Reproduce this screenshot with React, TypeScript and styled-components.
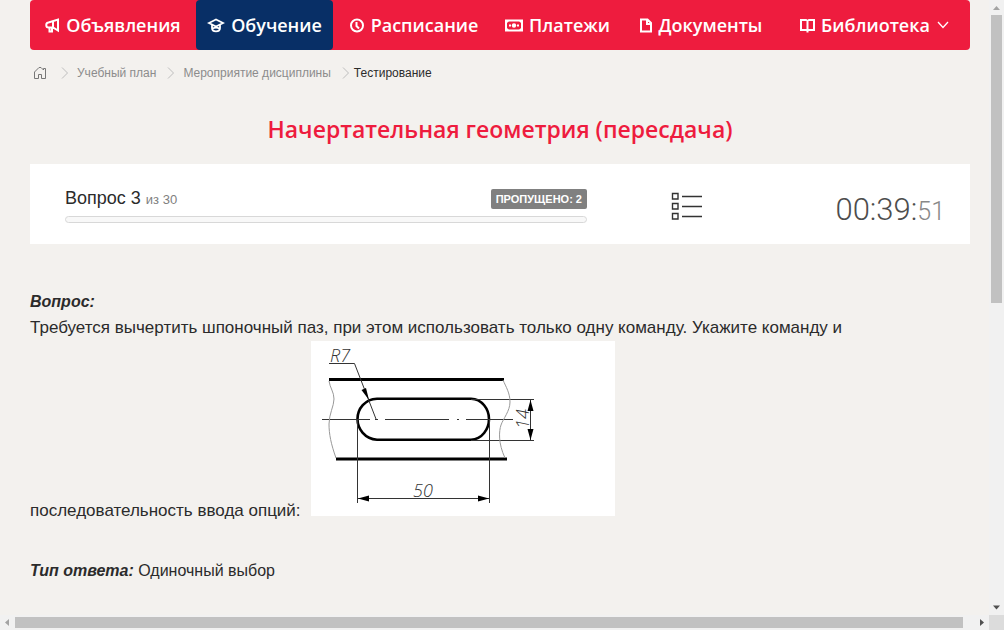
import React from "react";
import styled, { createGlobalStyle } from "styled-components";

const GlobalStyle = createGlobalStyle`
  *, *::before, *::after { box-sizing: border-box; }
  body {
    margin: 0;
    background: #f3f1ee;
    color: #2b2b2b;
    font-family: "Liberation Sans", Arial, sans-serif;
    font-size: 16px;
  }
`;

const Shell = styled.div`
  display: grid;
  grid-template-columns: minmax(0, 1fr) 15px;
  grid-template-rows: minmax(0, 1fr) 15px;
  height: 100vh;
`;

const Page = styled.div`
  overflow: hidden;
  padding: 0 19px 0 30px;
`;

const Nav = styled.nav`
  display: grid;
  grid-template-columns: 166fr 137fr 161fr 127fr 159fr 190fr;
  height: 50px;
  border-radius: 4px;
  background: #ee1c3e;
`;

const NavLink = styled.a<{ $active?: boolean }>`
  display: flex;
  align-items: center;
  justify-content: center;
  gap: 6px;
  border-radius: 4px;
  background: ${(p) => (p.$active ? "#082f66" : "transparent")};
  color: #fff;
  font: 600 18px/24px "Open Sans", sans-serif;
  text-decoration: none;
  white-space: nowrap;
`;

const NavIcon = styled.svg`
  flex: none;
  fill: none;
  stroke: #fff;
  stroke-width: 2;
`;

const Crumbs = styled.nav`
  display: flex;
  align-items: center;
  height: 46px;
  padding-left: 3px;
  font-size: 12px;
  line-height: 16px;
`;

const Crumb = styled.a`
  display: flex;
  color: #8c8c8c;
  text-decoration: none;
`;

const CrumbCurrent = styled.span`
  color: #2b2b2b;
`;

const CrumbArrow = styled.svg<{ $tight?: boolean }>`
  flex: none;
  margin: 0 ${(p) => (p.$tight ? "3px" : "7px")} 0 10px;
  fill: none;
  stroke: #bdbdbd;
`;

const Title = styled.h1`
  margin: 17px 0 18px;
  color: #ee1c3e;
  font: 600 23px/33px "Open Sans", sans-serif;
  text-align: center;
`;

const StatusCard = styled.section`
  display: grid;
  grid-template-columns: 592fr 130fr 218fr;
  align-items: center;
  height: 80px;
  background: #fff;
`;

const Progress = styled.div`
  padding: 2px 35px 0;
`;

const ProgressHead = styled.div`
  display: flex;
  align-items: center;
  justify-content: space-between;
  height: 22px;
  margin-bottom: 6px;
  font-size: 18px;
`;

const Total = styled.small`
  color: #808080;
  font-size: 13px;
`;

const SkippedBadge = styled.span`
  padding: 0 5px;
  border-radius: 2px;
  background: #808080;
  color: #fff;
  font-size: 11px;
  font-weight: bold;
  line-height: 20px;
`;

const ProgressTrack = styled.div`
  height: 7px;
  border: 1px solid #d8d8d8;
  border-radius: 4px;
  background: #f8f8f8;
`;

const ListButton = styled.button`
  display: flex;
  justify-self: center;
  padding: 4px 0 0;
  border: 0;
  background: none;
  cursor: pointer;
`;

const Timer = styled.div`
  padding: 14px 25px 0 0;
  color: #4d4d4d;
  font: 300 31px/40px Roboto, sans-serif;
  text-align: right;
`;

const Seconds = styled.span`
  color: #888;
  font-size: 25px;
`;

const Question = styled.section`
  padding-top: 45px;
  line-height: 26px;
`;

const Label = styled.strong`
  font-style: italic;
`;

const QuestionText = styled.p`
  margin: 0;
  font-size: 17px;
`;

const Drawing = styled.svg`
  margin: 0 6px;
  background: #fff;
  vertical-align: baseline;
`;

const DrawingText = styled.text`
  fill: #333;
  stroke: none;
  font: italic 300 18px "Open Sans", sans-serif;
`;

const AnswerType = styled.p`
  margin: 0;
  padding-top: 34px;
`;

const ScrollTrack = styled.div<{ $vertical?: boolean }>`
  display: flex;
  flex-direction: ${(p) => (p.$vertical ? "column" : "row")};
  align-items: center;
  background: #f1f1f1;
`;

const ScrollArrow = styled.svg`
  flex: none;
  width: 15px;
  height: 15px;
`;

const ScrollThumb = styled.div<{ $vertical?: boolean; $share: string }>`
  flex: 0 0 calc((100% - 30px) * ${(p) => p.$share});
  ${(p) => (p.$vertical ? "width: 11px;" : "height: 11px;")}
  background: #c1c1c1;
`;

const ScrollRest = styled.div`
  flex: 1;
`;

const ScrollCorner = styled.div`
  background: #dcdcdc;
`;

function Arrow({ tight }: { tight?: boolean }) {
  return (
    <CrumbArrow $tight={tight} width="10" height="12" viewBox="0 0 10 12" aria-hidden="true">
      <path d="M2 .5 7.5 6 2 11.5" />
    </CrumbArrow>
  );
}

function KeywayDrawing() {
  return (
    <Drawing width="304" height="175" viewBox="0 0 304 175" role="img" aria-label="Шпоночный паз">
      <g fill="none" stroke="#000" strokeWidth="3">
        <path d="M18 38.5H193M25 118H196" />
        <path d="M66 57.7H160C171 58 178 68 178 78S171 98.5 160 98.7H66C54 98 46.5 88 46.5 78S54 58 66 57.7Z" strokeWidth="2.6" />
      </g>
      <g fill="none" stroke="#333" strokeWidth="1">
        <path d="M18 22.5H43.5L65 78" />
        <path d="M11 78.5H59M64 78.5H67M74 78.5H138M146 78.5H148M155 78.5H202" />
        <path d="M46.5 78V162M178.5 78V162M47 157.5H178" />
        <path d="M160 58.5H223M160 99.5H223M219.5 59V99" />
      </g>
      <g fill="none" stroke="#999" strokeWidth="1">
        <path d="M18 40C19 47 23 51 23 58S18 73 18 83S20 103 25 117" />
        <path d="M192 39C195 46 199 52 199 61S192 78 190 84S187 102 194 117" />
      </g>
      <g fill="#000">
        <path d="M58 59 50.5 49 55 47Z" />
        <path d="M47 157.5 58 154.5V160.5ZM178 157.5 167 154.5V160.5Z" />
        <path d="M219.5 59 216.5 70H222.5ZM219.5 99 216.5 88H222.5Z" />
      </g>
      <DrawingText x="19" y="21">R7</DrawingText>
      <DrawingText x="102" y="156">50</DrawingText>
      <DrawingText transform="translate(218 88) rotate(-90)">14</DrawingText>
    </Drawing>
  );
}

export default function App() {
  return (
    <>
      <GlobalStyle />
      <Shell>
        <Page>
          <Nav>
            <NavLink href="#news">
              <NavIcon width="15" height="15" viewBox="0 0 15 15" aria-hidden="true">
                <path d="M13 1.5V12.500L8 9.5H3.500C.5 9.500 .5 4.500 3.500 4.500L13 1.500ZM4.500 9.500V13.500H7V9.500M8 4V9" />
              </NavIcon>
              Объявления
            </NavLink>
            <NavLink href="#study" $active>
              <NavIcon width="18" height="15" viewBox="0 0 18 15" aria-hidden="true">
                <path d="M2 5 9 1.500 16 5 9 8.500ZM5 7V10C5 14.500 13 14.500 13 10V7M5.500 10.500C7.500 9.500 10.500 9.500 12.500 10.500" strokeWidth="1.8" />
              </NavIcon>
              Обучение
            </NavLink>
            <NavLink href="#schedule">
              <NavIcon width="16" height="15" viewBox="0 0 16 15" aria-hidden="true">
                <circle cx="8" cy="7.500" r="6" />
                <path d="M7.500 4V8L10 10.500" />
              </NavIcon>
              Расписание
            </NavLink>
            <NavLink href="#payments">
              <NavIcon width="18" height="13" viewBox="0 0 18 13" aria-hidden="true">
                <path d="M1 1.500H17V11.500H1Z" />
                <circle cx="9" cy="6.500" r="2.200" fill="#fff" stroke="none" />
                <path d="M4 6.500H6M12 6.500H14" />
                <path d="M1 1H5L1 5ZM17 1H13L17 5ZM1 12H5L1 8ZM17 12H13L17 8Z" fill="#fff" stroke="none" />
              </NavIcon>
              Платежи
            </NavLink>
            <NavLink href="#documents">
              <NavIcon width="14" height="15" viewBox="0 0 14 15" aria-hidden="true">
                <path d="M2 1.500H8.500L12 5V13.500H2ZM8 2V6H12" />
              </NavIcon>
              Документы
            </NavLink>
            <NavLink href="#library">
              <NavIcon width="15" height="15" viewBox="0 0 15 15" aria-hidden="true">
                <path d="M1 2H6L7.500 3 9 2H14V12H9L7.500 13 6 12H1ZM7.500 2.500V14.500" />
              </NavIcon>
              Библиотека
              <NavIcon width="14" height="8" viewBox="0 0 14 8" aria-hidden="true">
                <path d="M2 1 7 6.500 12 1" strokeWidth="1.3" />
              </NavIcon>
            </NavLink>
          </Nav>

          <Crumbs aria-label="Навигация">
            <Crumb href="#home" aria-label="Главная">
              <svg width="17" height="14" viewBox="0 0 17 14" fill="none" stroke="#777" aria-hidden="true">
                <path d="M1.500 12.500V6L6 1.500H8L10.500 4V2.500H12.500V12.500H8.500V8.500H5.500V12.500Z" />
              </svg>
            </Crumb>
            <Arrow />
            <Crumb href="#plan">Учебный план</Crumb>
            <Arrow />
            <Crumb href="#event">Мероприятие дисциплины</Crumb>
            <Arrow tight />
            <CrumbCurrent>Тестирование</CrumbCurrent>
          </Crumbs>

          <Title>Начертательная геометрия (пересдача)</Title>

          <StatusCard>
            <Progress>
              <ProgressHead>
                <span>
                  Вопрос 3 <Total>из 30</Total>
                </span>
                <SkippedBadge>ПРОПУЩЕНО: 2</SkippedBadge>
              </ProgressHead>
              <ProgressTrack />
            </Progress>
            <ListButton type="button" aria-label="Список вопросов">
              <svg width="32" height="28" viewBox="0 0 32 28" fill="none" stroke="#333" aria-hidden="true">
                <path d="M1.500 1.500H7V7H1.500ZM1.500 11.500H7V17H1.500ZM1.500 21.500H7V27H1.500Z" strokeWidth="1.4" />
                <path d="M11 4.500H31M11 14.500H31M11 24.500H31" strokeWidth="1.3" />
              </svg>
            </ListButton>
            <Timer>
              00:39:<Seconds>51</Seconds>
            </Timer>
          </StatusCard>

          <Question>
            <Label>Вопрос:</Label>
            <QuestionText>
              Требуется вычертить шпоночный паз, при этом использовать только одну команду. Укажите команду и
              последовательность ввода опций: <KeywayDrawing />
            </QuestionText>
            <AnswerType>
              <Label>Тип ответа:</Label> Одиночный выбор
            </AnswerType>
          </Question>
        </Page>

        <ScrollTrack $vertical>
          <ScrollArrow viewBox="0 0 15 15" fill="#a3a3a3"><path d="M4 10 7.500 6 11 10Z" /></ScrollArrow>
          <ScrollThumb $vertical $share="0.492" />
          <ScrollRest />
          <ScrollArrow viewBox="0 0 15 15" fill="#505050"><path d="M4 5.500H11L7.500 9.500Z" /></ScrollArrow>
        </ScrollTrack>
        <ScrollTrack>
          <ScrollArrow viewBox="0 0 15 15" fill="#a3a3a3"><path d="M9 4V11L5 7.500Z" /></ScrollArrow>
          <ScrollThumb $share="0.989" />
          <ScrollRest />
          <ScrollArrow viewBox="0 0 15 15" fill="#505050"><path d="M6 4V11L10 7.500Z" /></ScrollArrow>
        </ScrollTrack>
        <ScrollCorner />
      </Shell>
    </>
  );
}
